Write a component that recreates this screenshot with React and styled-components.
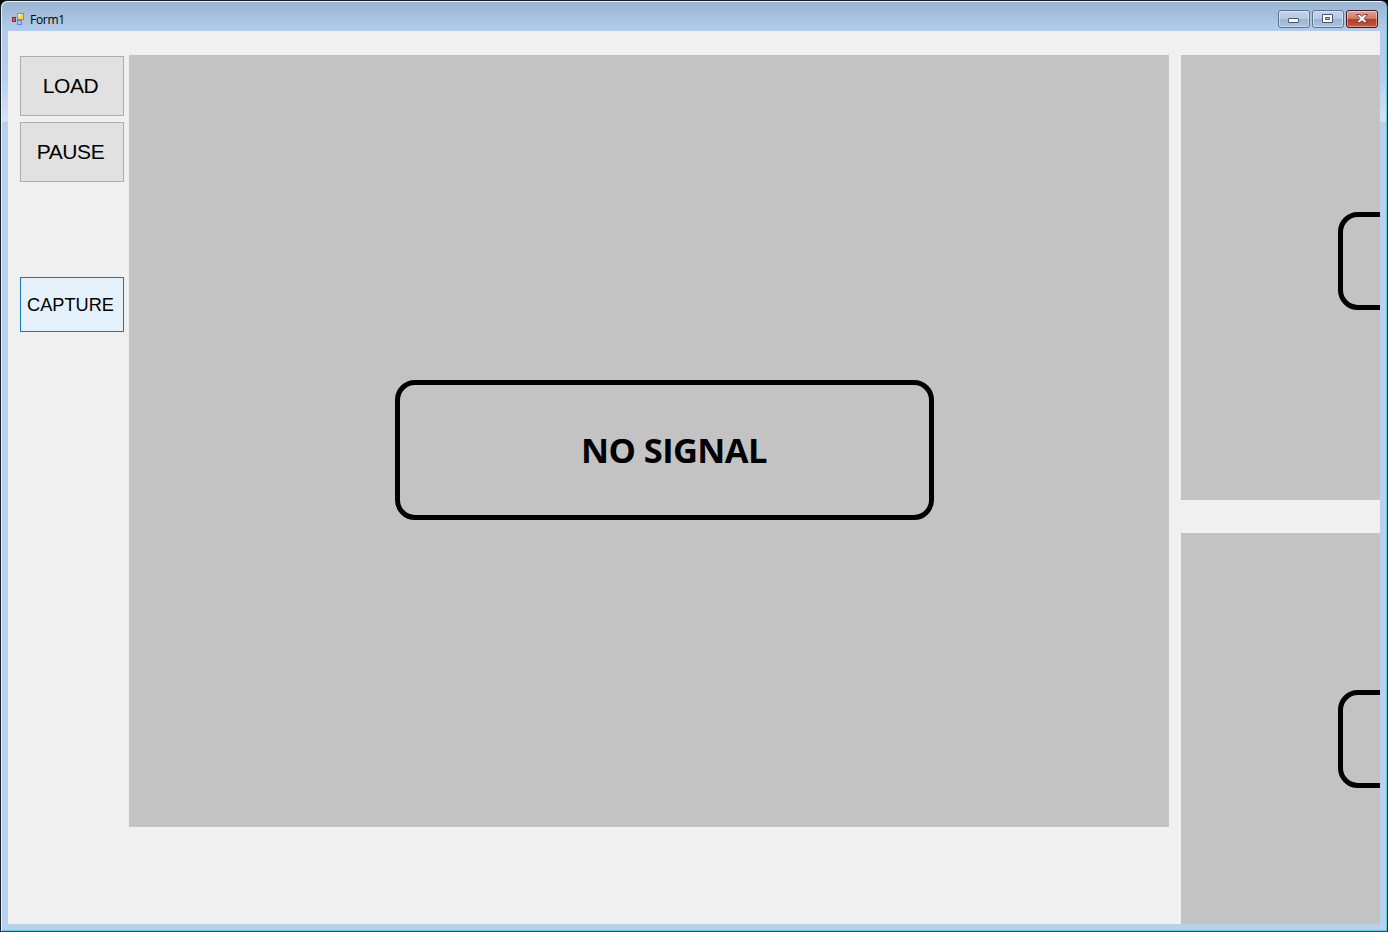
import React from "react";
import styled, { createGlobalStyle } from "styled-components";

const GlobalStyle = createGlobalStyle`
  * { box-sizing: border-box; }
  body { margin: 0; background: #05070b; overflow: hidden; }
`;

const WindowFrame = styled.div`
  width: 1388px;
  height: 932px;
  display: flex;
  flex-direction: column;
  padding: 0 6px 6px;
  border: 1px solid #15202b;
  border-right-color: #10323d;
  border-bottom-color: #22525f;
  border-radius: 7px 7px 0 0;
  background: linear-gradient(#99b4d1 0, #b3cceb 30px, #b6cfec 75px, #d5e3f6 120px, #b9d1ea 121px);
  box-shadow: inset 1px 1px 0 #e9f2fb, inset -1px -1px 0 #62cbe0;
`;

const TitleBar = styled.header`
  height: 30px;
  flex: none;
  display: flex;
  align-items: flex-start;
  padding: 9px 3px 0 4px;
`;

const Title = styled.span`
  flex: 1;
  margin: 2px 0 0 4px;
  font: 12px/16px "Open Sans", "Noto Sans", sans-serif;
  letter-spacing: -0.3px;
  color: #000;
`;

const Controls = styled.div`
  display: flex;
  gap: 2px;
`;

const ControlButton = styled.button`
  width: 32px;
  height: 18px;
  padding: 0;
  display: flex;
  align-items: center;
  justify-content: center;
  border: 1px solid ${(p) => (p.$close ? "#4b1720" : "#5c7290")};
  border-radius: 3px;
  background: ${(p) =>
    p.$close
      ? "linear-gradient(#e3a797 0, #d17561 48%, #b83a20 50%, #c9563b 100%)"
      : "linear-gradient(#c2d5eb 0, #b3cae4 48%, #98b4d3 50%, #abc5e1 100%)"};
  box-shadow: inset 0 0 0 1px rgba(255, 255, 255, 0.4);
`;

const Client = styled.main`
  flex: 1;
  min-height: 0;
  margin: 0 1px 1px;
  display: flex;
  overflow: hidden;
  padding-left: 12px;
  background: #f0f0f0;
`;

const Sidebar = styled.nav`
  width: 109px;
  flex: none;
  padding-top: 25px;
`;

const FormButton = styled.button`
  display: block;
  width: 104px;
  height: ${(p) => (p.$active ? 55 : 60)}px;
  margin: ${(p) => (p.$active ? "95px 0 0" : "0 0 6px")};
  padding: ${(p) => (p.$active ? 1 : 0)}px 3px 0 0;
  border: 1px solid ${(p) => (p.$active ? "#0f79bb" : "#adadad")};
  background: ${(p) => (p.$active ? "#e4f1fb" : "#e1e1e1")};
  color: #000;
  font: ${(p) => (p.$active ? 18.2 : 21)}px "Liberation Sans", Arial, sans-serif;
  letter-spacing: ${(p) => (p.$active ? 0 : -0.4)}px;
  white-space: nowrap;
`;

const MainFeed = styled.section`
  width: 1040px;
  height: 772px;
  flex: none;
  margin-top: 24px;
  padding: 325px 0 0 266px;
  background: #c3c3c3;
`;

const SignalBox = styled.div`
  width: 539px;
  height: 140px;
  display: flex;
  align-items: center;
  justify-content: center;
  padding-left: 19px;
  border: 5px solid #000;
  border-radius: 20px;
  color: #000;
  font: bold 34.5px/48px "Open Sans", "Noto Sans", sans-serif;
  letter-spacing: -0.6px;
  white-space: nowrap;
`;

const SideFeeds = styled.aside`
  flex: 1;
  min-width: 0;
  margin: 24px 0 0 12px;
  display: flex;
  flex-direction: column;
  gap: 33px;
`;

const SideFeed = styled.section`
  height: 445px;
  flex: none;
  padding: 157px 0 0 157px;
  overflow: hidden;
  background: #c3c3c3;
`;

const SideSignal = styled.div`
  width: 340px;
  height: 98px;
  border: 5px solid #000;
  border-radius: 20px;
`;

const AppIcon = () => (
  <svg width="15" height="16" viewBox="0 0 15 16" aria-hidden="true">
    <rect x="1.5" y="7.5" width="3" height="4" fill="#d8645c" stroke="#a01c22" />
    <rect x="6.5" y="3.5" width="6" height="6" fill="#f9d34b" stroke="#b8862c" />
    <path d="M7.5 7V4.5H11" fill="none" stroke="#fff0a8" />
    <rect x="6.5" y="10.5" width="4" height="4" fill="#a5c0f5" stroke="#5f86d8" />
  </svg>
);

const MinimizeIcon = () => (
  <svg width="12" height="12" viewBox="0 0 12 12">
    <rect x=".5" y="5.5" width="10" height="4" rx=".5" fill="#fff" stroke="#46566c" />
  </svg>
);

const MaximizeIcon = () => (
  <svg width="12" height="12" viewBox="0 0 12 12">
    <path fillRule="evenodd" d="M.5 1.5h10v8H.5z M3.5 4.5v2h4v-2z" fill="#fff" stroke="#46566c" />
  </svg>
);

const CloseIcon = () => (
  <svg width="12" height="12" viewBox="0 0 12 12">
    <path d="M.5 1.5h3.3L6 3.4l2.2-1.9h3.3L8 5.5l3.5 4H8.2L6 7.6 3.8 9.5H.5l3.5-4z" fill="#fff" stroke="#62404a" strokeWidth=".9" />
  </svg>
);

export default function App() {
  return (
    <>
      <GlobalStyle />
      <WindowFrame>
        <TitleBar>
          <AppIcon />
          <Title>Form1</Title>
          <Controls>
            <ControlButton aria-label="Minimize"><MinimizeIcon /></ControlButton>
            <ControlButton aria-label="Maximize"><MaximizeIcon /></ControlButton>
            <ControlButton $close aria-label="Close"><CloseIcon /></ControlButton>
          </Controls>
        </TitleBar>
        <Client>
          <Sidebar>
            <FormButton>LOAD</FormButton>
            <FormButton>PAUSE</FormButton>
            <FormButton $active>CAPTURE</FormButton>
          </Sidebar>
          <MainFeed>
            <SignalBox>NO SIGNAL</SignalBox>
          </MainFeed>
          <SideFeeds>
            <SideFeed><SideSignal /></SideFeed>
            <SideFeed><SideSignal /></SideFeed>
          </SideFeeds>
        </Client>
      </WindowFrame>
    </>
  );
}
